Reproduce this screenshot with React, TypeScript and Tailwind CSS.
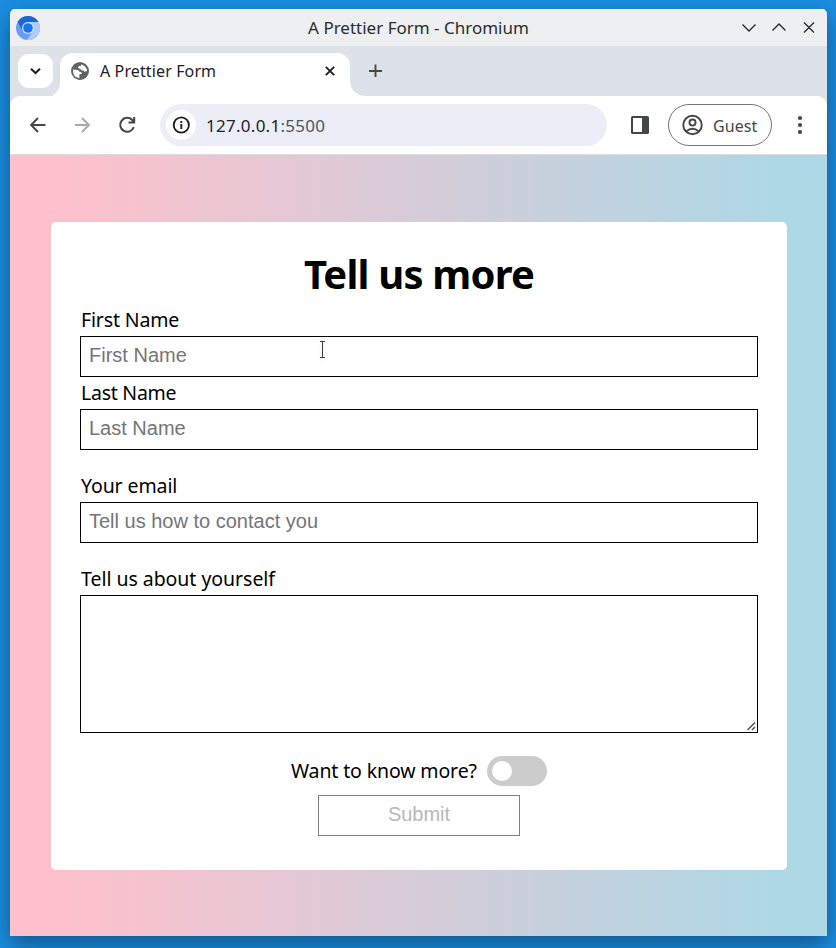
import type { ReactNode } from "react";

const ui = "font-['Noto_Sans',sans-serif]";
const inputFont = "font-['Liberation_Sans',Arial,sans-serif]";

function ChromiumLogo() {
  return (
    <svg width="24" height="24" viewBox="0 0 24 24">
      <circle cx="12" cy="12" r="12" fill="#669df6" />
      <path d="M12 6H22.4A12 12 0 0 1 11 24L17.2 15Z" fill="#aecbfa" />
      <path d="M1.6 6A12 12 0 0 1 22.4 6H12L6.8 15Z" fill="#1967d2" />
      <circle cx="12" cy="12" r="6" fill="#d2e3fc" />
      <circle cx="12" cy="12" r="4.8" fill="#1a73e8" />
    </svg>
  );
}

function TitleBar() {
  return (
    <div className="flex h-[37px] items-center border-t border-[#f8f9f9] bg-[#eeeff1] pl-[6px] pr-[12px]">
      <div className="w-[108px]"><ChromiumLogo /></div>
      <div className={`${ui} flex-1 pb-[2px] text-center text-[17px] leading-none text-[#292c2f]`}>
        <span className="whitespace-nowrap">A Prettier Form - Chromium</span>
      </div>
      <svg className="w-[102px]" width="102" height="20" viewBox="0 0 102 20" fill="none" stroke="#25282b" strokeWidth="1.3">
        <path d="M29.5 6.5L36 13L42.5 6.5M59.500 12.500L66 6L72.500 12.500M91 4.500L101 14.500M101 4.500L91 14.500" />
      </svg>
    </div>
  );
}

function TabBar() {
  return (
    <div className="flex h-[50px] bg-[#dde1e8]">
      <div className="ml-2 mt-2 flex h-[34px] w-[35px] items-center justify-center rounded-[11px] bg-white">
        <svg width="14" height="10" viewBox="0 0 14 10" fill="none" stroke="#202124" strokeWidth="2">
          <path d="M2 2.700L6.500 7L11 2.700" />
        </svg>
      </div>
      <svg className="mt-[37px]" width="7" height="13" viewBox="0 0 7 13"><path d="M7 0C7 7 2 13-5 13H7Z" fill="white" /></svg>
      <div className="mt-[7px] flex h-[43px] w-[290px] items-center rounded-t-[13px] bg-white pb-[7px] pl-[11px] pr-[14px]">
        <svg width="18" height="18" viewBox="0 0 18 18">
          <circle cx="9" cy="9" r="9" fill="#5f6368" />
          <path d="M2 7.500L6.600 8Q8 8.200 8 9.600L9.800 10Q11 10.400 10.800 12H8.400V15.900Q2.600 15.600 1.900 9.500ZM10 2.200Q9.700 3.100 9.900 4H8.200Q7.100 4.200 7.200 6.100Q8 6.800 9.200 6.900Q9.900 8.300 11.600 8.600Q13 8.500 13.200 9.800L16.100 9Q15.900 4.200 10 2.200Z" fill="white" />
        </svg>
        <span className={`${ui} ml-[11px] flex-1 text-[16px] tracking-[0.12px] text-[#202124]`}>A Prettier Form</span>
        <svg width="12" height="12" viewBox="0 0 12 12" stroke="#202124" strokeWidth="1.900"><path d="M1.800 1.800L10.200 10.200M10.200 1.800L1.800 10.200" /></svg>
      </div>
      <svg className="mt-[34px]" width="16" height="16" viewBox="0 0 16 16"><path d="M0 0C0 9 6 16 16 16H0Z" fill="white" /></svg>
      <svg className="ml-[2px] mt-[18px]" width="14" height="14" viewBox="0 0 14 14" stroke="#474747" strokeWidth="1.900"><path d="M7.500 .5V13M1 7H14" /></svg>
    </div>
  );
}

function Toolbar() {
  return (
    <div className="bg-[#dde1e8]">
      <div className="flex h-[59px] items-center rounded-t-[10px] border-b border-[#dadcdd] bg-white pl-5">
        <svg width="16" height="16" viewBox="0 0 16 16" fill="none" stroke="#454746" strokeWidth="1.900"><path d="M15.500 8H1.500M8 1L1.200 8L8 15" /></svg>
        <svg className="ml-[28px]" width="16" height="16" viewBox="0 0 16 16" fill="none" stroke="#a9a9a9" strokeWidth="1.900"><path d="M1 8H14.500M8 1L14.800 8L8 15" /></svg>
        <svg className="ml-[28px]" width="18" height="18" viewBox="0 0 18 18" fill="none" stroke="#454746" strokeWidth="2">
          <path d="M15.800 11.200A7 7 0 1 1 14.300 4L16 6M16.200 1V6.500H10.500" />
        </svg>
        <div className="ml-[24px] flex h-[42px] w-[447px] items-center rounded-full bg-[#ebeef7] pl-[6px]">
          <div className="flex size-[30px] items-center justify-center rounded-full bg-white">
            <svg width="18" height="18" viewBox="0 0 18 18" fill="none" stroke="#1f1f1f" strokeWidth="1.900">
              <circle cx="9.300" cy="9" r="7.600" /><path d="M9.300 8V13M9.300 5V7" />
            </svg>
          </div>
          <span className={`${ui} ml-[10px] pt-px text-[17px] tracking-[0.27px] text-[#1f2328]`}>127.0.0.1<span className="text-[#50545b]">:5500</span></span>
        </div>
        <svg className="ml-6" width="18" height="18" viewBox="0 0 18 18"><rect width="18" height="18" rx="1.500" fill="#454746" /><path d="M2 2H11V16H2Z" fill="white" /></svg>
        <div className="ml-[19px] flex h-[42px] w-[104px] items-center rounded-full border border-[#747775] pl-[13px]">
          <svg width="21" height="22" viewBox="0 0 22 22" fill="none" stroke="#454746" strokeWidth="2">
            <circle cx="11" cy="11" r="9.700" /><circle cx="11" cy="8.500" r="3.200" /><path d="M4.500 17.500Q11 12.500 17.500 17.500" />
          </svg>
          <span className={`${ui} ml-[10px] pt-px text-[16px] tracking-[0.1px] text-[#454746]`}>Guest</span>
        </div>
        <svg className="ml-[25px]" width="6" height="20" viewBox="0 0 6 20" fill="#454746"><circle cx="3" cy="3" r="2.100" /><circle cx="3" cy="10" r="2.100" /><circle cx="3" cy="17" r="2.100" /></svg>
      </div>
    </div>
  );
}

function Field({ label, track, children }: { label: string; track: string; children: ReactNode }) {
  return (
    <label className="block">
      <span className={`${ui} ml-px block h-8 text-[19.500px] leading-[32px] text-black ${track}`}>{label}</span>
      {children}
    </label>
  );
}

const box = `${inputFont} block h-[41px] w-full rounded-none border border-black bg-white px-2 pb-[3px] text-[20px] text-black outline-none placeholder:text-[#757575]`;

export default function App() {
  return (
    <div className="h-[948px] w-[836px] overflow-hidden bg-[#1a8de0] pl-[10px] pt-[9px]">
      <div className="flex h-[927px] w-[817px] flex-col overflow-hidden rounded-t-[5px] shadow-[0_9px_22px_0px_rgba(0,0,0,0.38)]">
        <TitleBar />
        <TabBar />
        <Toolbar />
        <main className="flex-1 bg-[linear-gradient(to_right,#ffc0cb_5%,#add8e6_95%)] pl-[41px] pt-[67px]">
          <form className="relative h-[648px] w-[736px] rounded-[5px] bg-white px-[29px] pt-[30px]">
            <h1 className={`${ui} h-[52px] text-center text-[40px] font-bold leading-[44px] tracking-[-0.8px] text-black`}>Tell us more</h1>
            <Field label="First Name" track="tracking-[-0.15px]"><input className={box} placeholder="First Name" /></Field>
            <Field label="Last Name" track="tracking-[-0.25px]"><input className={box} placeholder="Last Name" /></Field>
            <div className="mt-5"><Field label="Your email" track="tracking-[-0.1px]"><input className={box} placeholder="Tell us how to contact you" /></Field></div>
            <div className="mt-5">
              <Field label="Tell us about yourself" track="tracking-[-0.04px]">
                <span className="relative block">
                  <textarea className="block h-[138px] w-full resize-none rounded-none border border-black bg-white outline-none" />
                  <svg className="absolute bottom-[2px] right-[2px]" width="9" height="9" viewBox="0 0 9 9" stroke="#555" strokeWidth="1.500"><path d="M.5 8L8 .5M5 8L8 5" /></svg>
                </span>
              </Field>
            </div>
            <div className="mt-[23px] flex h-[30px] items-center pl-[211px]">
              <span className={`${ui} w-[196px] whitespace-nowrap text-[19.500px] tracking-[-0.13px] text-black`}>Want to know more?</span>
              <span className="flex h-[30px] w-[60px] items-center rounded-full bg-[#ccc] pl-[5px]"><span className="size-5 rounded-full bg-white" /></span>
            </div>
            <button type="button" disabled className={`${inputFont} mx-auto mt-[9px] block h-[41px] w-[202px] border border-[#808080] bg-white pb-[3px] text-[20px] text-[#b8b8b8]`}>Submit</button>
            <svg className="absolute left-[267px] top-[118px] drop-shadow-sm" width="9" height="20" viewBox="0 0 9 20" fill="none" stroke="#3f3f3f">
              <path d="M2 1.500H7M2 17.500H7M4.500 2V17" />
            </svg>
          </form>
        </main>
      </div>
    </div>
  );
}
